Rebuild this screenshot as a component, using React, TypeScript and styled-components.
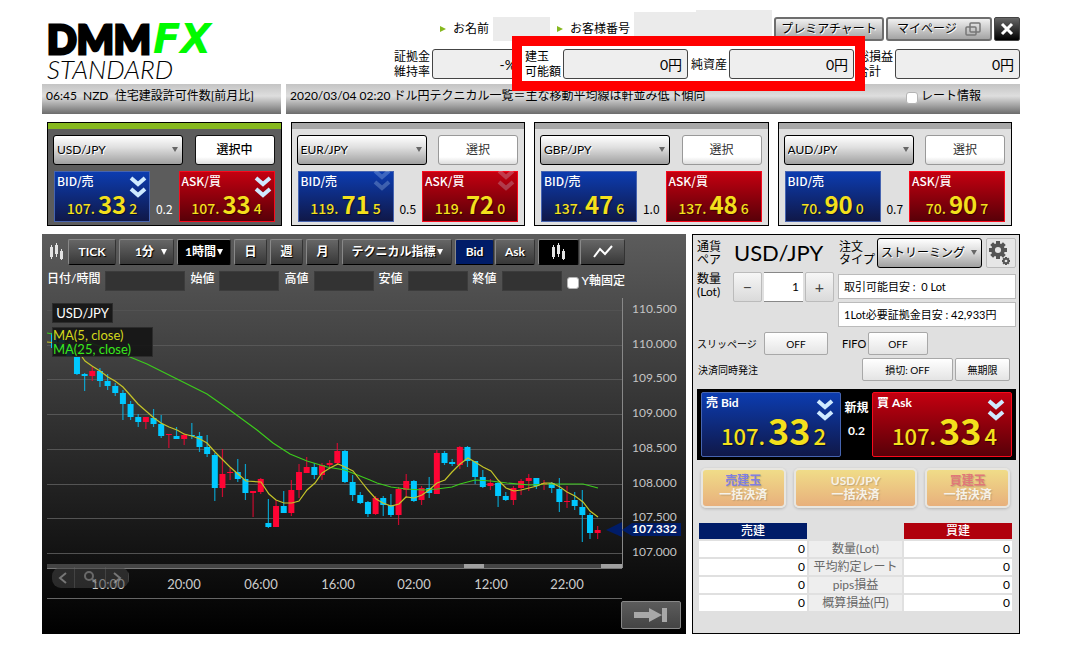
import React from "react";
import styled, { createGlobalStyle, css } from "styled-components";

const GlobalStyle = createGlobalStyle`
  *, *::before, *::after { box-sizing: border-box; }
  body {
    margin: 0;
    background: #fff;
    color: #000;
    font-family: Lato, "Noto Sans CJK JP", sans-serif;
    font-size: 12px;
    line-height: 16px;
  }
  button, input, select, output {
    font-family: inherit;
    font-size: inherit;
    line-height: inherit;
    color: inherit;
  }
  button { padding: 0; cursor: pointer; white-space: nowrap; }
`;

const cjkFont = `"Noto Sans CJK JP", sans-serif`;

const Page = styled.main`
  padding: 10px 45px 16px 42px;
`;

/* ---------- header ---------- */

const Header = styled.header`
  display: flex;
  justify-content: space-between;
  padding-left: 5px;
`;

const Logo = styled.div`
  padding-top: 11px;
  white-space: nowrap;
`;

const LogoTop = styled.div`
  display: flex;
  gap: 2px;
  height: 38px;
  font-size: 39px;
  line-height: 36px;
  font-weight: 900;
`;

const LogoDmm = styled.span`
  -webkit-text-stroke: 3px #000;
`;

const LogoFx = styled.span`
  color: #00fa00;
  font-family: "DejaVu Sans", sans-serif;
  font-size: 40px;
  font-weight: 700;
  font-style: oblique;
`;

const LogoSub = styled.div`
  font-size: 26px;
  line-height: 20px;
  font-weight: 300;
  font-style: italic;
`;

const HeaderSide = styled.div`
  display: flex;
  flex-direction: column;
  align-items: flex-end;
  gap: 8px;
`;

const AccountRow = styled.div`
  display: flex;
  align-items: flex-end;
  height: 31px;
  gap: 2px;
`;

const AccountLabel = styled.span`
  display: flex;
  align-items: center;
  gap: 7px;
  height: 24px;
  margin: 0 2px 0 5px;
  white-space: nowrap;

  &::before {
    content: "";
    border-left: 6px solid #86b81e;
    border-top: 3px solid transparent;
    border-bottom: 3px solid transparent;
  }
`;

const Mask = styled.span<{ $w: number; $h: number }>`
  width: ${(p) => p.$w}px;
  height: ${(p) => p.$h}px;
  background: #ebebeb;
`;

const MaskPair = styled.span`
  display: flex;
  align-items: flex-end;
`;

const HeadButton = styled.button<{ $w: number }>`
  display: flex;
  align-items: center;
  justify-content: center;
  gap: 8px;
  width: ${(p) => p.$w}px;
  height: 24px;
  border: 2px solid #6e6e6e;
  border-radius: 3px;
  background: linear-gradient(#f0f0f0, #a4a4a4);
  text-shadow: 1px 1px 0 #fff;
`;

const CloseButton = styled.button`
  display: grid;
  place-items: center;
  width: 26px;
  height: 24px;
  border: 1px solid #444;
  border-radius: 2px;
  background: linear-gradient(#666, #000);
`;

const BalanceRow = styled.div`
  display: flex;
  gap: 3px;
`;

const Balance = styled.div`
  display: flex;
  align-items: center;
  gap: 2px;
`;

const BalanceLabel = styled.label`
  width: 36px;
  line-height: 15px;
  white-space: nowrap;
`;

const BalanceValue = styled.output<{ $w: number }>`
  width: ${(p) => p.$w}px;
  height: 30px;
  padding-right: 5px;
  border: 1px solid #444;
  border-radius: 3px;
  background: #eee;
  font-size: 14px;
  line-height: 29px;
  text-align: right;
`;

const Highlight = styled.div`
  position: relative;
  display: flex;
  gap: 3px;

  &::after {
    content: "";
    position: absolute;
    inset: -13px -11px -12px -13px;
    border: 10px solid #f00;
    pointer-events: none;
    z-index: 1;
  }
`;

/* ---------- news ---------- */

const NewsRow = styled.div`
  display: grid;
  grid-template-columns: minmax(0, 239fr) minmax(0, 734fr);
  gap: 5px;
  margin-top: 5px;
`;

const News = styled.div`
  display: flex;
  align-items: flex-start;
  justify-content: space-between;
  height: 30px;
  padding: 4px 39px 0 4px;
  background: linear-gradient(#c4c4c4, #dedede 40%, #a6a6a6 70%, #6c6c6c);
  white-space: pre;
`;

const TickLabel = styled.label`
  display: flex;
  align-items: center;
  gap: 3px;
  white-space: nowrap;
`;

const Tick = styled.input`
  appearance: none;
  width: 12px;
  height: 12px;
  margin: 4px 0 0;
  border: 1px solid #b4b4b4;
  border-radius: 3px;
  background: #fff;

  &:checked { background: #3a78d8; }
`;

/* ---------- rate cards ---------- */

const Rates = styled.section`
  display: grid;
  grid-template-columns: repeat(4, 1fr);
  gap: 9px;
  padding: 0 8px 0 5px;
  margin-top: 8px;
`;

const RateCard = styled.article<{ $active?: boolean }>`
  height: 104px;
  border: 1px solid #000;
  background: ${(p) => (p.$active ? "#5c5c5c" : "#e0e0e0")};
  color: ${(p) => (p.$active ? "#fff" : "#000")};

  &::before {
    content: "";
    display: block;
    height: 6px;
    background: ${(p) => (p.$active ? "#86b81e" : "#a8a8a8")};
  }
`;

const RateTop = styled.div`
  display: flex;
  justify-content: space-between;
  padding: 6px 6px 0 5px;
`;

const SelectWrap = styled.span<{ $w: number }>`
  position: relative;
  width: ${(p) => p.$w}px;

  &::after {
    content: "";
    position: absolute;
    right: 5px;
    top: 12px;
    border-top: 5px solid #666;
    border-left: 3px solid transparent;
    border-right: 3px solid transparent;
    pointer-events: none;
  }
`;

const Select = styled.select`
  appearance: none;
  width: 100%;
  height: 30px;
  padding: 0 3px;
  border: 1px solid #000;
  border-radius: 3px;
  background: linear-gradient(#fff, #e0e0e0 40%, #a0a0a0);
  color: #000;
  text-shadow: 1px 1px 0 #fff;
`;

const PickButton = styled.button<{ $active?: boolean }>`
  width: 80px;
  height: 30px;
  border: 1px solid ${(p) => (p.$active ? "#111" : "#999")};
  border-radius: 3px;
  background: linear-gradient(#fff 75%, #ddd);
  color: ${(p) => (p.$active ? "#000" : "#333")};
  font-weight: ${(p) => (p.$active ? 500 : 400)};
`;

const RateBottom = styled.div`
  display: grid;
  grid-template-columns: 96px 1fr 96px;
  padding: 6px 6px 0;
`;

const tileColors = css<{ $side: "bid" | "ask" }>`
  border: 1px solid ${(p) => (p.$side === "bid" ? "#4664b0" : "#f80a1c")};
  background: ${(p) =>
    p.$side === "bid"
      ? "linear-gradient(#0c3cb0, #101848)"
      : "linear-gradient(#c40010, #580008)"};
`;

const Tile = styled.button<{ $side: "bid" | "ask" }>`
  ${tileColors}
  position: relative;
  display: flex;
  flex-direction: column;
  height: 51px;
  padding: 0 2px;
  color: #fff;
  font-family: ${cjkFont};
  font-weight: 500;
  text-align: left;
`;

const TileLabel = styled.span`
  height: 18px;
  line-height: 18px;
`;

const Price = styled.span<{ $large?: boolean }>`
  display: flex;
  align-items: baseline;
  justify-content: center;
  align-self: stretch;
  gap: 3px;
  padding-left: ${(p) => (p.$large ? 5 : 0)}px;
  color: #f4e01c;
  font-family: ${cjkFont};
  font-weight: 500;
  font-size: ${(p) => (p.$large ? 22 : 14)}px;
  line-height: ${(p) => (p.$large ? 34 : 28)}px;
  text-shadow: 1px 1px 1px #0008;

  strong {
    font-size: ${(p) => (p.$large ? 36 : 24)}px;
    font-weight: 700;
  }
`;

const Chevrons = styled.svg<{ $faded?: boolean; $top: number; $right: number }>`
  position: absolute;
  top: ${(p) => p.$top}px;
  right: ${(p) => p.$right}px;
  fill: none;
  stroke: #cfeaff;
  stroke-width: 4;
  opacity: ${(p) => (p.$faded ? 0.25 : 1)};
`;

const Spread = styled.span`
  align-self: end;
  padding-bottom: 5px;
  font-family: ${cjkFont};
  text-align: center;
`;

/* ---------- chart ---------- */

const Main = styled.div`
  display: grid;
  grid-template-columns: 644fr 328fr;
  gap: 6px;
  align-items: start;
  margin-top: 8px;
`;

const ChartPanel = styled.section`
  padding-top: 5px;
  background: linear-gradient(#5c5c5c, #000);
  color: #fff;
`;

const Toolbar = styled.div`
  display: flex;
  align-items: center;
  gap: 3px;
  height: 26px;
  padding-left: 7px;
`;

const ToolGroup = styled.div`
  display: flex;
  gap: 1px;
`;

const ToolButton = styled.button<{ $w: number; $tone?: string }>`
  display: flex;
  align-items: center;
  justify-content: center;
  gap: 1px;
  width: ${(p) => p.$w}px;
  height: 26px;
  border: 1px solid;
  border-color: #888 #333 #000 #888;
  border-radius: 2px;
  background: ${(p) => p.$tone ?? "linear-gradient(#666, #383838)"};
  color: #fff;
  font-weight: 700;
  text-shadow: 1px 1px 1px #000;

  svg { display: block; }
`;

const Arrow = styled.i<{ $gap?: number }>`
  margin-left: ${(p) => p.$gap ?? 0}px;
  border-top: 6px solid #fff;
  border-left: 3px solid transparent;
  border-right: 3px solid transparent;
`;

const FieldRow = styled.div`
  display: flex;
  align-items: center;
  gap: 5px;
  height: 20px;
  margin-top: 6px;
  padding-left: 5px;
  font-weight: 500;
`;

const FieldLabel = styled.label`
  height: 20px;
  white-space: nowrap;
`;

const Field = styled.output<{ $w: number }>`
  width: ${(p) => p.$w}px;
  height: 20px;
  border: 1px solid #3c3c3c;
  background: #333;
`;

const Canvas = styled.div`
  position: relative;
  margin-top: 5px;

  > svg { display: block; width: 100%; height: auto; }
`;

const Legend = styled.div<{ $top: number; $w: number }>`
  position: absolute;
  left: 10px;
  top: ${(p) => p.$top}px;
  width: ${(p) => p.$w}px;
  border: 1px solid #2c2c2c;
  background: #111d;
  line-height: 14px;
  white-space: nowrap;
`;

const LegendTitle = styled.div`
  font-size: 13px;
  line-height: 18px;
  text-align: center;
`;

const Ma = styled.div<{ $color: string }>`
  color: ${(p) => p.$color};
  font-size: 13px;
`;

const ZoomPill = styled.div`
  position: absolute;
  left: 10px;
  top: 271px;
  display: grid;
  grid-template-columns: 23px 31px 23px;
  height: 21px;
  overflow: hidden;
  border-radius: 9px;
  opacity: 0.75;
`;

const PillButton = styled.button`
  display: grid;
  place-items: center;
  border: 0;
  border-right: 1px solid #555;
  background: #444444c0;
`;

const EndButton = styled.button`
  position: absolute;
  right: 5px;
  top: 305px;
  display: grid;
  place-items: center;
  width: 60px;
  height: 28px;
  border: 1px solid #888;
  border-radius: 2px;
  background: linear-gradient(#5c5c5c, #444);
`;

/* ---------- order panel ---------- */

const OrderPanel = styled.section`
  height: 400px;
  padding: 3px 3px 0 4px;
  border: 1px solid #000;
  background: #e0e0e0;
`;

const OrderRow = styled.div<{ $h: number; $top?: number }>`
  display: flex;
  align-items: center;
  height: ${(p) => p.$h}px;
  margin-top: ${(p) => p.$top ?? 0}px;
`;

const StackLabel = styled.label<{ $w: number }>`
  flex: none;
  width: ${(p) => p.$w}px;
  line-height: 13px;
  white-space: nowrap;
`;

const PairName = styled.span`
  flex: 1;
  font-size: 22px;
  line-height: 28px;
`;

const GearButton = styled.button`
  display: grid;
  place-items: center;
  width: 30px;
  height: 30px;
  margin-left: 4px;
  border: 1px solid #bbb;
  border-radius: 2px;
  background: #e6e6e6;
`;

const LotBlock = styled.div`
  display: flex;
  gap: 2px;
  height: 30px;
`;

const StepButton = styled.button`
  width: 29px;
  border: 1px solid #bbb;
  border-radius: 2px;
  background: linear-gradient(#f6f6f6, #dadada);
  color: #444;
  font-size: 16px;
`;

const LotInput = styled.input`
  width: 39px;
  padding: 0 4px;
  border: 0;
  border-top: 1px solid #888;
  border-bottom: 1px solid #888;
  border-radius: 0;
  background: #fff;
  text-align: right;
`;

const LotRow = styled.div`
  display: flex;
  align-items: flex-start;
  margin-top: 4px;
`;

const Notes = styled.div`
  display: grid;
  flex: 1;
  gap: 3px;
  margin: 2px 0 0 4px;
`;

const Note = styled.output`
  height: 25px;
  padding-left: 5px;
  border: 1px solid #bbb;
  background: #fff;
  font-size: 11px;
  line-height: 24px;
  white-space: pre;
`;

const SmallLabel = styled.label<{ $w?: number; $left?: number; $size?: number }>`
  width: ${(p) => (p.$w ? `${p.$w}px` : "auto")};
  margin-left: ${(p) => p.$left ?? 0}px;
  font-size: ${(p) => p.$size ?? 10}px;
  white-space: nowrap;
`;

const SmallButton = styled.button<{ $w: number; $left?: number }>`
  width: ${(p) => p.$w}px;
  height: 23px;
  margin-left: ${(p) => p.$left ?? 0}px;
  border: 1px solid #a8a8a8;
  border-radius: 2px;
  background: linear-gradient(#fff, #e4e4e4);
  font-size: 10px;
`;

const Deal = styled.div`
  display: grid;
  grid-template-columns: 140px 1fr 140px;
  height: 71px;
  margin-top: 8px;
  padding: 3px 4px;
  background: #000;
  color: #fff;
`;

const DealTile = styled.button<{ $side: "bid" | "ask" }>`
  ${tileColors}
  position: relative;
  display: flex;
  flex-direction: column;
  height: 65px;
  padding: 2px 4px 0;
  border-radius: 2px;
  color: #fff;
  font-weight: 700;
  text-align: left;
`;

const DealLabel = styled.span`
  height: 17px;
  line-height: 16px;
`;

const DealMid = styled.div`
  display: flex;
  flex-direction: column;
  gap: 7px;
  padding-top: 8px;
  font-weight: 700;
  text-align: center;
`;

const CloseRow = styled.div`
  display: grid;
  grid-template-columns: 85fr 124fr 85fr;
  gap: 8px;
  margin: 8px 6px 0 4px;
`;

const CloseAll = styled.button`
  height: 40px;
  border: 2px solid #e8e6e0;
  border-radius: 5px;
  background: linear-gradient(#f0dc88, #e8b07c);
  box-shadow: 0 1px 3px #0003;
  color: #f6f2e8;
  font-weight: 700;
  line-height: 14px;
  text-shadow: 1px 1px 1px #a0886880;
`;

const CloseName = styled.span<{ $color?: string }>`
  display: block;
  color: ${(p) => p.$color ?? "inherit"};
`;

const Positions = styled.table`
  width: calc(100% - 2px);
  margin-top: 13px;
  border-collapse: separate;
  border-spacing: 2px;
  table-layout: fixed;

  th, td { height: 16px; padding: 0 2px; line-height: 16px; }
  td { background: #fff; text-align: right; }
`;

const ColHead = styled.th<{ $bg: string }>`
  width: 108px;
  background: ${(p) => p.$bg};
  color: #fff;
  font-weight: 500;
`;

const RowHead = styled.th`
  background: #eee;
  color: #666;
  font-weight: 400;
`;

/* ---------- data ---------- */

type Quote = [string, string, string];

const rates: {
  pair: string;
  bid: Quote;
  ask: Quote;
  spread: string;
  active?: boolean;
  arrows?: "bright" | "faded";
}[] = [
  { pair: "USD/JPY", bid: ["107.", "33", "2"], ask: ["107.", "33", "4"], spread: "0.2", active: true, arrows: "bright" },
  { pair: "EUR/JPY", bid: ["119.", "71", "5"], ask: ["119.", "72", "0"], spread: "0.5", arrows: "faded" },
  { pair: "GBP/JPY", bid: ["137.", "47", "6"], ask: ["137.", "48", "6"], spread: "1.0" },
  { pair: "AUD/JPY", bid: ["70.", "90", "0"], ask: ["70.", "90", "7"], spread: "0.7" },
];

/* Each candle: body top, body bottom, wick top, wick bottom, 1 when rising. */
const candles: [number, number, number, number, number][] = [
  [37, 52, 36, 53, 0], [44, 53, 44, 54, 0], [49, 61, 45, 61, 0], [61, 78, 61, 79, 0],
  [78, 80, 77, 95, 0], [75, 80, 71, 85, 1], [75, 85, 72, 91, 0], [85, 90, 78, 94, 0],
  [90, 97, 87, 100, 0], [97, 108, 94, 124, 0], [108, 121, 105, 124, 0], [121, 126, 118, 131, 0],
  [121, 126, 121, 133, 1], [122, 128, 113, 131, 0], [128, 140, 119, 142, 0], [138, 139, 138, 152, 1],
  [140, 143, 131, 143, 0], [139, 143, 137, 149, 1], [139, 140, 127, 143, 0], [140, 151, 136, 156, 0],
  [151, 158, 139, 161, 0], [159, 192, 157, 205, 0], [178, 192, 153, 201, 1], [176, 177, 172, 184, 1],
  [176, 183, 163, 186, 0], [183, 197, 168, 204, 0], [195, 197, 195, 221, 1], [183, 196, 182, 198, 1],
  [227, 231, 203, 232, 0], [210, 231, 204, 231, 1], [210, 217, 195, 217, 0], [194, 217, 184, 220, 1],
  [176, 194, 168, 202, 1], [171, 177, 161, 177, 1], [171, 179, 167, 183, 0], [169, 179, 167, 184, 1],
  [167, 169, 164, 171, 1], [155, 167, 147, 169, 1], [155, 186, 154, 187, 0], [186, 199, 179, 205, 0],
  [199, 207, 196, 208, 0], [206, 218, 205, 221, 0], [202, 218, 200, 219, 1], [202, 209, 200, 220, 0],
  [209, 219, 198, 221, 0], [193, 219, 191, 229, 1], [185, 194, 178, 202, 1], [185, 205, 184, 206, 0],
  [192, 204, 190, 209, 1], [192, 197, 181, 202, 0], [157, 198, 154, 198, 1], [157, 167, 155, 169, 0],
  [166, 168, 163, 170, 0], [151, 169, 150, 173, 1], [151, 165, 150, 171, 0], [165, 181, 165, 188, 0],
  [181, 191, 174, 192, 0], [187, 190, 183, 194, 1], [187, 200, 186, 211, 0], [200, 204, 196, 205, 0],
  [192, 204, 190, 209, 1], [185, 192, 183, 199, 1], [182, 185, 178, 195, 1], [182, 190, 182, 193, 0],
  [187, 189, 184, 194, 1], [187, 192, 186, 197, 0], [193, 206, 182, 216, 0], [205, 206, 190, 212, 1],
  [204, 210, 196, 214, 0], [211, 219, 194, 246, 0], [219, 237, 217, 243, 0], [234, 237, 230, 243, 1],
];

const ma5 =
  "5,46 26,48 38,58 43,65 50,70 58,75 66,81 73,85 81,91 89,100 96,108 104,115 112,122 119,127 127,131 135,134 142,138 150,140 158,143 165,147 173,156 181,164 188,171 196,178 204,185 219,186 227,198 234,204 242,207 250,207 257,205 265,194 273,187 280,177 288,172 296,168 303,171 311,175 318,184 326,194 334,203 341,207 349,210 357,208 364,201 372,202 380,199 387,194 395,187 403,184 410,176 418,168 426,162 433,166 441,171 449,175 456,184 464,192 472,195 479,194 487,192 495,190 502,187 510,187 518,191 525,196 533,200 541,206 548,215 556,221";
const ma25 =
  "5,37 38,43 88,61 105,68 135,83 165,98 185,112 215,134 231,147 248,158 265,165 285,171 303,174 328,184 335,187 349,191 364,193 381,194 395,193 410,191 418,188 433,184 449,185 465,187 488,189 505,188 541,188 556,192";

const priceLabels = ["110.500", "110.000", "109.500", "109.000", "108.500", "108.000", "107.500", "107.000"];
const timeLabels: [number, string][] = [
  [66, "10:00"], [142, "20:00"], [219, "06:00"], [296, "16:00"], [372, "02:00"], [449, "12:00"], [525, "22:00"],
];

/* ---------- pieces ---------- */

const DoubleChevron = ({ top, right, faded }: { top: number; right: number; faded?: boolean }) => (
  <Chevrons $top={top} $right={right} $faded={faded} width="18" height="24" viewBox="0 0 18 24" aria-hidden="true">
    <path d="M2 3 L9 9 L16 3" />
    <path d="M2 14 L9 20 L16 14" />
  </Chevrons>
);

const CandleIcon = () => (
  <svg width="16" height="18" viewBox="0 0 16 18" fill="#e4e4e4" aria-hidden="true">
    <path d="M1 4h3v10H1zM2 2h1v14H2zM6 2h3v9H6zM7 0h1v14H7zM11 8h3v8h-3zM12 6h1v11h-1z" />
  </svg>
);

const QuoteText = ({ quote, large }: { quote: Quote; large?: boolean }) => (
  <Price $large={large}>
    <span>{quote[0]}</span>
    <strong>{quote[1]}</strong>
    <span>{quote[2]}</span>
  </Price>
);

const gear = (cx: number, cy: number, r: number, t: number) => (
  <g transform={`translate(${cx} ${cy})`} fill="#555">
    {[0, 45, 90, 135].map((a) => (
      <rect key={a} x={-t / 2} y={-r} width={t} height={r * 2} transform={`rotate(${a})`} />
    ))}
    <circle r={r * 0.76} />
    <circle r={r * 0.34} fill="#e6e6e6" />
  </g>
);

const PriceChart = () => (
  <svg viewBox="0 0 644 338" role="img" aria-label="USD/JPY 1時間">
    {priceLabels.map((label, i) => {
      const y = 14 + Math.round(i * 34.7);
      return (
        <g key={label}>
          <rect x="5" y={y} width="575" height="1" fill="#5a5a5a" opacity={i === 0 ? 0.5 : 0.9} />
          <text x="590" y={y + 3} fill="#c4c4c4" fontSize="12">{label}</text>
        </g>
      );
    })}
    {candles.map(([top, bottom, high, low, up], i) => {
      const x = 12 + i * 7.657;
      const color = up ? "#ff0434" : "#00c8ff";
      return (
        <g key={i} fill={color}>
          <rect x={x - 0.6} y={high} width="1.2" height={low - high} opacity="0.75" />
          <rect x={x - 3} y={top} width="6" height={bottom - top} />
        </g>
      );
    })}
    <polyline points={ma25} fill="none" stroke="#3ccc1c" strokeWidth="1.2" />
    <polyline points={ma5} fill="none" stroke="#c4c428" strokeWidth="1.2" />
    <rect x="580" y="2" width="1" height="270" fill="#888" />
    <rect x="5" y="268" width="575" height="4" fill="#444" />
    <rect x="422" y="268" width="20" height="4" fill="#a0a0a0" />
    <rect x="559" y="268" width="21" height="4" fill="#a0a0a0" />
    <rect x="5" y="272" width="575" height="1" fill="#777" />
    <rect x="5" y="302" width="575" height="1" fill="#666" />
    <path d="M564 234 L580 226 V241 Z" fill="#001c68" />
    <path d="M580 234 L590 227 H639 V240 H590 Z" fill="#001c68" />
    <text x="590" y="237" fill="#fff" fontSize="12" fontWeight="700">107.332</text>
    {timeLabels.map(([x, label]) => (
      <text key={label} x={x} y="293" fill="#ccc" fontSize="13" textAnchor="middle">{label}</text>
    ))}
  </svg>
);

export default function App() {
  return (
    <>
      <GlobalStyle />
      <Page>
        <Header>
          <Logo>
            <LogoTop>
              <LogoDmm>DMM</LogoDmm>
              <LogoFx>FX</LogoFx>
            </LogoTop>
            <LogoSub>STANDARD</LogoSub>
          </Logo>
          <HeaderSide>
            <AccountRow>
              <AccountLabel>お名前</AccountLabel>
              <Mask $w={57} $h={24} />
              <AccountLabel>お客様番号</AccountLabel>
              <MaskPair>
                <Mask $w={62} $h={29} />
                <Mask $w={76} $h={31} />
              </MaskPair>
              <HeadButton $w={110}>プレミアチャート</HeadButton>
              <HeadButton $w={106}>
                マイページ
                <svg width="16" height="14" viewBox="0 0 16 14" fill="none" stroke="#777" strokeWidth="1.5" aria-hidden="true">
                  <rect x="5" y="1" width="10" height="9" rx="1" />
                  <rect x="1" y="5" width="10" height="8" rx="1" />
                </svg>
              </HeadButton>
              <CloseButton aria-label="閉じる">
                <svg width="14" height="14" viewBox="0 0 14 14" stroke="#fff" strokeWidth="3" aria-hidden="true">
                  <path d="M2 2 L12 12 M12 2 L2 12" />
                </svg>
              </CloseButton>
            </AccountRow>
            <BalanceRow>
              <Balance>
                <BalanceLabel htmlFor="ratio">証拠金<br />維持率</BalanceLabel>
                <BalanceValue id="ratio" $w={90}>-%</BalanceValue>
              </Balance>
              <Highlight>
                <Balance>
                  <BalanceLabel htmlFor="available">建玉<br />可能額</BalanceLabel>
                  <BalanceValue id="available" $w={125}>0円</BalanceValue>
                </Balance>
                <Balance>
                  <BalanceLabel htmlFor="equity">純資産</BalanceLabel>
                  <BalanceValue id="equity" $w={125}>0円</BalanceValue>
                </Balance>
              </Highlight>
              <Balance>
                <BalanceLabel htmlFor="total">総損益<br />合計</BalanceLabel>
                <BalanceValue id="total" $w={125}>0円</BalanceValue>
              </Balance>
            </BalanceRow>
          </HeaderSide>
        </Header>

        <NewsRow>
          <News>{"06:45  NZD  住宅建設許可件数[前月比]"}</News>
          <News>
            <span>2020/03/04 02:20 ドル円テクニカル一覧＝主な移動平均線は軒並み低下傾向</span>
            <TickLabel>
              <Tick type="checkbox" />
              レート情報
            </TickLabel>
          </News>
        </NewsRow>

        <Rates>
          {rates.map((r) => (
            <RateCard key={r.pair} $active={r.active}>
              <RateTop>
                <SelectWrap $w={130}>
                  <Select defaultValue={r.pair} aria-label="通貨ペア">
                    <option>{r.pair}</option>
                  </Select>
                </SelectWrap>
                <PickButton $active={r.active}>{r.active ? "選択中" : "選択"}</PickButton>
              </RateTop>
              <RateBottom>
                <Tile $side="bid">
                  <TileLabel>BID/売</TileLabel>
                  <QuoteText quote={r.bid} />
                  {r.arrows && <DoubleChevron top={r.arrows === "faded" ? -4 : 3} right={2} faded={r.arrows === "faded"} />}
                </Tile>
                <Spread>{r.spread}</Spread>
                <Tile $side="ask">
                  <TileLabel>ASK/買</TileLabel>
                  <QuoteText quote={r.ask} />
                  {r.arrows && <DoubleChevron top={r.arrows === "faded" ? -4 : 3} right={2} faded={r.arrows === "faded"} />}
                </Tile>
              </RateBottom>
            </RateCard>
          ))}
        </Rates>

        <Main>
          <ChartPanel>
            <Toolbar>
              <CandleIcon />
              <ToolButton $w={48}>TICK</ToolButton>
              <ToolButton $w={55}>&nbsp;&nbsp;&nbsp;1分<Arrow $gap={6} /></ToolButton>
              <ToolButton $w={54} $tone="#000">1時間<Arrow /></ToolButton>
              <ToolButton $w={33}>日</ToolButton>
              <ToolButton $w={33}>週</ToolButton>
              <ToolButton $w={33}>月</ToolButton>
              <ToolButton $w={110}>テクニカル指標<Arrow /></ToolButton>
              <ToolGroup>
                <ToolButton $w={39} $tone="#001c68">Bid</ToolButton>
                <ToolButton $w={40}>Ask</ToolButton>
              </ToolGroup>
              <ToolGroup>
                <ToolButton $w={41} $tone="#000" aria-label="ローソク足"><CandleIcon /></ToolButton>
                <ToolButton $w={45} aria-label="ライン">
                  <svg width="20" height="14" viewBox="0 0 20 14" fill="none" stroke="#fff" strokeWidth="2" aria-hidden="true">
                    <path d="M1 12 L7 4 L12 9 L19 1" />
                  </svg>
                </ToolButton>
              </ToolGroup>
            </Toolbar>
            <FieldRow>
              <FieldLabel htmlFor="date">日付/時間</FieldLabel><Field id="date" $w={80} />
              <FieldLabel htmlFor="open">始値</FieldLabel><Field id="open" $w={60} />
              <FieldLabel htmlFor="high">高値</FieldLabel><Field id="high" $w={60} />
              <FieldLabel htmlFor="low">安値</FieldLabel><Field id="low" $w={60} />
              <FieldLabel htmlFor="close">終値</FieldLabel><Field id="close" $w={60} />
              <TickLabel><Tick type="checkbox" />Y軸固定</TickLabel>
            </FieldRow>
            <Canvas>
              <PriceChart />
              <Legend $top={7} $w={61}><LegendTitle>USD/JPY</LegendTitle></Legend>
              <Legend $top={31} $w={101}>
                <Ma $color="#d4d81c">MA(5, close)</Ma>
                <Ma $color="#38e81c">MA(25, close)</Ma>
              </Legend>
              <ZoomPill>
                <PillButton aria-label="前へ">
                  <svg width="10" height="12" viewBox="0 0 10 12" fill="none" stroke="#999" strokeWidth="2"><path d="M8 1 L2 6 L8 11" /></svg>
                </PillButton>
                <PillButton aria-label="拡大">
                  <svg width="14" height="14" viewBox="0 0 14 14" fill="none" stroke="#888" strokeWidth="2"><circle cx="6" cy="5" r="4" /><path d="M9 8 L13 12" /></svg>
                </PillButton>
                <PillButton aria-label="次へ">
                  <svg width="10" height="12" viewBox="0 0 10 12" fill="none" stroke="#999" strokeWidth="2"><path d="M2 1 L8 6 L2 11" /></svg>
                </PillButton>
              </ZoomPill>
              <EndButton aria-label="最新へ">
                <svg width="34" height="16" viewBox="0 0 34 16" fill="#a8a8a8" aria-hidden="true">
                  <path d="M0 5h15V1l13 7-13 7v-4H0zM28 1h5v14h-5z" />
                </svg>
              </EndButton>
            </Canvas>
          </ChartPanel>

          <OrderPanel>
            <OrderRow $h={30}>
              <StackLabel as="span" $w={37}>通貨<br />ペア</StackLabel>
              <PairName>USD/JPY</PairName>
              <StackLabel htmlFor="type" $w={38}>注文<br />タイプ</StackLabel>
              <SelectWrap $w={105}>
                <Select id="type" defaultValue="ストリーミング">
                  <option>ストリーミング</option>
                </Select>
              </SelectWrap>
              <GearButton aria-label="設定">
                <svg width="24" height="26" viewBox="0 0 24 26" aria-hidden="true">
                  {gear(9, 10, 9, 4)}
                  {gear(17, 21, 4, 2)}
                </svg>
              </GearButton>
            </OrderRow>
            <LotRow>
              <StackLabel htmlFor="lot" $w={36}>数量<br />(Lot)</StackLabel>
              <LotBlock>
                <StepButton aria-label="減らす">−</StepButton>
                <LotInput id="lot" defaultValue="1" />
                <StepButton aria-label="増やす">+</StepButton>
              </LotBlock>
              <Notes>
                <Note>{"取引可能目安 :  0 Lot"}</Note>
                <Note>1Lot必要証拠金目安 : 42,933円</Note>
              </Notes>
            </LotRow>
            <OrderRow $h={23} $top={5}>
              <SmallLabel htmlFor="slip" $w={67}>スリッページ</SmallLabel>
              <SmallButton id="slip" $w={64}>OFF</SmallButton>
              <SmallLabel htmlFor="fifo" $left={14} $w={26} $size={11}>FIFO</SmallLabel>
              <SmallButton id="fifo" $w={60}>OFF</SmallButton>
            </OrderRow>
            <OrderRow $h={23} $top={3}>
              <SmallLabel as="span" $left={1} $w={164}>決済同時発注</SmallLabel>
              <SmallButton $w={91}>損切: OFF</SmallButton>
              <SmallButton $w={55} $left={2}>無期限</SmallButton>
            </OrderRow>
            <Deal>
              <DealTile $side="bid">
                <DealLabel>売 Bid</DealLabel>
                <QuoteText quote={["107.", "33", "2"]} large />
                <DoubleChevron top={5} right={6} />
              </DealTile>
              <DealMid>
                <span>新規</span>
                <span>0.2</span>
              </DealMid>
              <DealTile $side="ask">
                <DealLabel>買 Ask</DealLabel>
                <QuoteText quote={["107.", "33", "4"]} large />
                <DoubleChevron top={5} right={6} />
              </DealTile>
            </Deal>
            <CloseRow>
              <CloseAll><CloseName $color="#8080e0">売建玉</CloseName>一括決済</CloseAll>
              <CloseAll><CloseName>USD/JPY</CloseName>一括決済</CloseAll>
              <CloseAll><CloseName $color="#e07878">買建玉</CloseName>一括決済</CloseAll>
            </CloseRow>
            <Positions>
              <thead>
                <tr>
                  <ColHead $bg="#001c68">売建</ColHead>
                  <th aria-label="項目" />
                  <ColHead $bg="#b0000c">買建</ColHead>
                </tr>
              </thead>
              <tbody>
                {["数量(Lot)", "平均約定レート", "pips損益", "概算損益(円)"].map((name) => (
                  <tr key={name}>
                    <td>0</td>
                    <RowHead scope="row">{name}</RowHead>
                    <td>0</td>
                  </tr>
                ))}
              </tbody>
            </Positions>
          </OrderPanel>
        </Main>
      </Page>
    </>
  );
}
